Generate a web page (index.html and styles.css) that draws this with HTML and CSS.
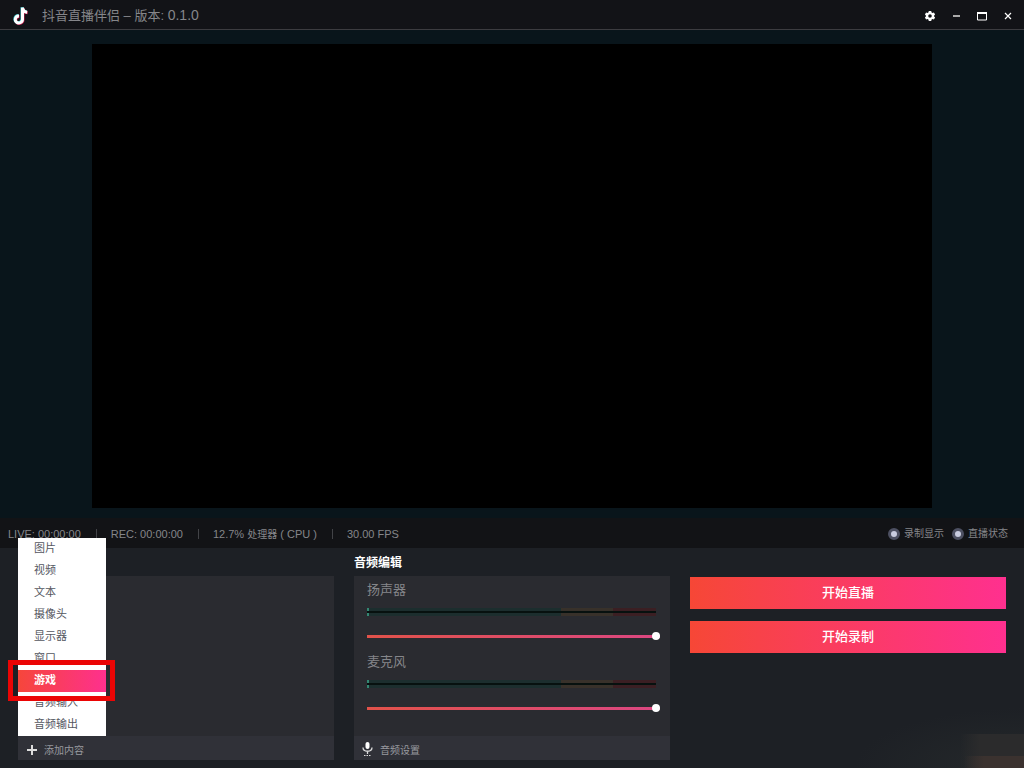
FILE: index.html
```html
<!DOCTYPE html>
<html lang="zh-CN">
<head>
<meta charset="utf-8">
<meta name="viewport" content="width=device-width, initial-scale=1">
<title>抖音直播伴侣</title>
<link rel="stylesheet" href="styles.css">
</head>
<body>
<header class="titlebar">
  <svg class="logo" viewBox="0 0 20 20" aria-hidden="true">
    <g fill="none" stroke-width="3">
      <path class="logo-red" d="M9.500 10.400a3.600 3.600 0 1 0 3.500 3.600V2.200c.3 2.800 2 4.400 4.700 4.600"/>
      <path class="logo-cyan" d="M8.500 9.400a3.600 3.600 0 1 0 3.500 3.600V1.200c.3 2.800 2 4.400 4.700 4.600"/>
      <path class="logo-white" d="M9 9.900a3.600 3.600 0 1 0 3.500 3.600V1.700c.3 2.800 2 4.400 4.700 4.600"/>
    </g>
  </svg>
  <h1 class="app-name">抖音直播伴侣 – 版本: <span class="version">0.1.0</span></h1>
  <div class="window-controls">
    <button class="window-button" aria-label="设置">
      <svg viewBox="0 0 12 12"><path fill="#fff" fill-rule="evenodd" d="M4.800 1h2.400l.4 1.400.9.5 1.400-.4 1.200 2-1 1v1l1 1-1.200 2-1.400-.4-.9.5L7.200 11H4.800l-.4-1.400-.9-.5-1.400.4-1.200-2 1-1v-1l-1-1 1.200-2 1.400.4.9-.5zM6 4.200a1.800 1.800 0 1 0 0 3.600 1.800 1.800 0 0 0 0-3.600z"/></svg>
    </button>
    <button class="window-button" aria-label="最小化">
      <svg viewBox="0 0 12 12"><path d="M3 6h7" stroke="#aaa" stroke-width="2"/></svg>
    </button>
    <button class="window-button" aria-label="最大化">
      <svg viewBox="0 0 12 12"><path d="M1.500 2v8h9V2" fill="none" stroke="#fff"/><path d="M1 3h10" stroke="#fff" stroke-width="2"/></svg>
    </button>
    <button class="window-button" aria-label="关闭">
      <svg viewBox="0 0 12 12"><path d="M3 3l6 6M9 3L3 9" stroke="#fff" stroke-width="1.200"/></svg>
    </button>
  </div>
</header>
<main class="preview"><div class="stage"></div></main>
<div class="statusbar">
  <span>LIVE: 00:00:00</span>
  <i class="divider"></i>
  <span>REC: 00:00:00</span>
  <i class="divider"></i>
  <span>12.7% <span class="cjk-small">处理器</span> ( CPU )</span>
  <i class="divider"></i>
  <span>30.00 FPS</span>
  <div class="indicators">
    <span class="indicator"><i class="dot"></i>录制显示</span>
    <span class="indicator"><i class="dot"></i>直播状态</span>
  </div>
</div>
<div class="dock">
  <section class="column">
    <div class="heading"></div>
    <div class="panel">
      <div class="panel-body"></div>
      <div class="panel-footer">
        <button class="footer-button">
          <svg class="footer-icon" viewBox="0 0 12 14"><path d="M6 3v10M1 8h10" stroke="#ddd" stroke-width="2"/></svg>
          添加内容
        </button>
        <div class="menu">
          <button class="menu-item">图片</button>
          <button class="menu-item">视频</button>
          <button class="menu-item">文本</button>
          <button class="menu-item">摄像头</button>
          <button class="menu-item">显示器</button>
          <button class="menu-item">窗口</button>
          <button class="menu-item menu-item-active">游戏</button>
          <button class="menu-item">音频输入</button>
          <button class="menu-item">音频输出</button>
          <div class="marker"></div>
        </div>
      </div>
    </div>
  </section>
  <section class="column">
    <h2 class="heading">音频编辑</h2>
    <div class="panel">
      <div class="panel-body">
        <div class="channel">
          <label class="channel-name" for="speaker">扬声器</label>
          <div class="level"></div>
          <input class="volume" id="speaker" type="range" min="0" max="100" value="100">
        </div>
        <div class="channel">
          <label class="channel-name" for="microphone">麦克风</label>
          <div class="level"></div>
          <input class="volume" id="microphone" type="range" min="0" max="100" value="100">
        </div>
      </div>
      <div class="panel-footer">
        <button class="footer-button">
          <svg class="footer-icon" viewBox="0 0 12 14"><rect x="3.500" y="0" width="4" height="7" rx="2" fill="#fff"/><path d="M1 5.500c0 5 9 5 9 0M5.500 9v3" fill="none" stroke="#ddd" stroke-width="1.300"/><path d="M2 13.500h7.500" stroke="#ddd" stroke-dasharray="1.500 1"/></svg>
          音频设置
        </button>
      </div>
    </div>
  </section>
  <section class="column actions">
    <button class="primary">开始直播</button>
    <button class="primary">开始录制</button>
  </section>
</div>
</body>
</html>
```
FILE: styles.css
```css
* { box-sizing: border-box; }

body {
  display: flex;
  flex-direction: column;
  min-height: 100vh;
  margin: 0;
  background: #1d2025;
  color: #85868a;
  font-family: "Liberation Sans", "Noto Sans CJK SC", sans-serif;
  font-size: 12px;
}

button {
  border: 0;
  padding: 0;
  background: none;
  color: inherit;
  font-family: inherit;
}

.titlebar {
  display: flex;
  align-items: center;
  height: 30px;
  padding: 2px 10px 0;
  border-bottom: 1px solid #3c3c40;
  background: #121317;
}

.logo { width: 20px; height: 20px; margin-right: 12px; }
.logo-red { stroke: #d01c50; }
.logo-cyan { stroke: #48c9cf; }
.logo-white { stroke: #fff; }

.app-name {
  margin: 0;
  font-size: 13px;
  font-weight: 400;
  line-height: 20px;
}
.version { font-size: 14px; }

.window-controls { display: flex; gap: 14px; margin-left: auto; }
.window-button { width: 12px; height: 12px; }
.window-button svg { display: block; }

.preview {
  display: flex;
  flex: 1;
  padding: 14px 92px 10px;
  background: #09151b;
}
.stage { flex: 1; background: #000; }

.statusbar {
  display: flex;
  align-items: center;
  height: 30px;
  padding: 2px 16px 0 8px;
  background: #121316;
  font-size: 11px;
  line-height: 16px;
}
.divider { width: 1px; height: 10px; margin: 0 14px 0 15px; background: #424347; }
.cjk-small { font-size: 10px; }
.indicators { display: flex; gap: 8px; margin-left: auto; font-size: 10px; }
.indicator { display: flex; align-items: center; gap: 4px; }
.dot {
  width: 12px;
  height: 12px;
  border: 3px solid #4d5062;
  border-radius: 50%;
  background: #c9cce0;
}

.dock {
  display: grid;
  grid-template-columns: repeat(3, 1fr);
  gap: 20px;
  min-height: 220px;
  padding: 0 18px 8px;
  background:
    linear-gradient(90deg, transparent, #3b322f 20px) 100% 100% / 60px 12px no-repeat,
    linear-gradient(90deg, transparent, #2b2b2c 20px) 100% 100% / 64px 34px no-repeat,
    radial-gradient(ellipse 170px 60px at 100% 100%, #25292b, transparent),
    #1d2025;
}
.column { display: flex; flex-direction: column; }
.heading {
  height: 28px;
  margin: 0;
  color: #fff;
  font-size: 12px;
  line-height: 30px;
}
.panel { display: flex; flex: 1; flex-direction: column; background: #2a2b30; }
.panel-body { flex: 1; }
.panel-footer { position: relative; height: 24px; background: #303138; }
.footer-button {
  display: flex;
  align-items: center;
  gap: 6px;
  height: 100%;
  padding: 2px 8px 0;
  color: #98999f;
  font-size: 10px;
}
.footer-icon { width: 12px; height: 14px; }

.menu {
  position: absolute;
  bottom: 100%;
  left: 0;
  width: 88px;
  background: #fff;
}
.menu-item {
  display: block;
  width: 100%;
  height: 22px;
  padding: 0 16px 2px;
  color: #55575f;
  font-size: 11px;
  line-height: 20px;
  text-align: left;
}
.menu-item-active {
  background: linear-gradient(90deg, #f6463b, #fe308e);
  color: #fff;
  font-weight: 700;
}
.marker {
  position: absolute;
  top: 122px;
  right: -9px;
  left: -10px;
  height: 41px;
  border: 5px solid #eb0505;
}

.channel { height: 72px; padding: 0 14px 0 13px; }
.channel-name {
  display: block;
  height: 28px;
  font-size: 13px;
  line-height: 28px;
}
.level {
  height: 8px;
  margin: 4px 0 16px;
  background:
    linear-gradient(transparent 3px, #07110f 3px, #07110f 5px, transparent 5px),
    linear-gradient(#348672, #348672) 0 0 / 2px 8px no-repeat,
    linear-gradient(90deg, #1c2e2e 67%, #38312a 67%, #38312a 85%, #3b1f23 85%);
}
.volume {
  display: block;
  width: calc(100% + 4px);
  height: 8px;
  margin: 0;
  appearance: none;
  background: linear-gradient(90deg, #e2524a, #dc4782) 0 50% / 100% 3px no-repeat;
}
.volume::-webkit-slider-thumb {
  width: 8px;
  height: 8px;
  appearance: none;
  border-radius: 50%;
  background: #fff;
}

.actions { gap: 12px; padding-top: 29px; }
.primary {
  height: 32px;
  padding-bottom: 3px;
  background: linear-gradient(90deg, #f64736, #ff308f);
  color: #fff;
  font-size: 13px;
  font-weight: 500;
}
```
